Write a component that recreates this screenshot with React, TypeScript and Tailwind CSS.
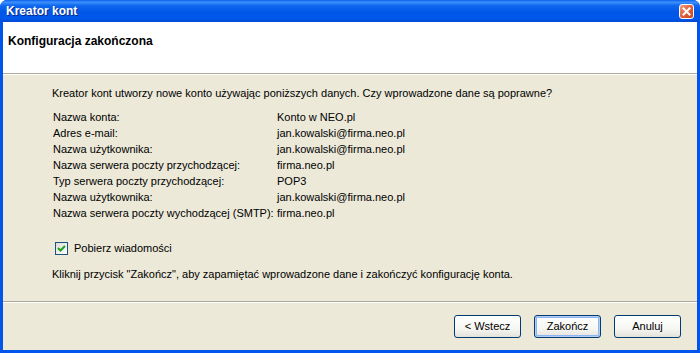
const rows: [string, string][] = [
  ["Nazwa konta:", "Konto w NEO.pl"],
  ["Adres e-mail:", "jan.kowalski@firma.neo.pl"],
  ["Nazwa użytkownika:", "jan.kowalski@firma.neo.pl"],
  ["Nazwa serwera poczty przychodzącej:", "firma.neo.pl"],
  ["Typ serwera poczty przychodzącej:", "POP3"],
  ["Nazwa użytkownika:", "jan.kowalski@firma.neo.pl"],
  ["Nazwa serwera poczty wychodzącej (SMTP):", "firma.neo.pl"],
];

function XpButton({ label, focused }: { label: string; focused?: boolean }) {
  return (
    <button
      className={
        "h-[23px] w-[67px] rounded-[3px] border border-[#003C74] bg-[linear-gradient(to_bottom,#FFFFFF_0%,#F6F6F3_60%,#E3E2DA_100%)] text-[11px] leading-none text-black " +
        (focused ? "shadow-[inset_0_0_0_1px_#B6CDF1,inset_0_0_0_2px_#8CB4F2]" : "")
      }
    >
      {label}
    </button>
  );
}

export default function App() {
  return (
    <div
      className="flex h-[353px] w-[700px] flex-col overflow-hidden rounded-t-[7px] bg-[#0055EA] font-['Liberation_Sans',Arial,sans-serif] text-[11px] leading-4 text-black"
    >
      {/* title bar */}
      <div className="flex h-[22px] shrink-0 items-center justify-between bg-[linear-gradient(to_bottom,#0A5FF0_0%,#3E91FB_10%,#1068F0_25%,#0056E6_55%,#0058EC_85%,#0048D0_100%)] pl-[6px] pr-[6px]">
        <span className="text-[12px] font-bold text-white [text-shadow:1px_1px_0_#0A2A8A]">
          Kreator kont
        </span>
        <div className="mt-[1px] flex h-[15px] w-[15px] items-center justify-center rounded-[3px] border border-white bg-[linear-gradient(135deg,#F0A184_0%,#E3643E_45%,#C84522_100%)]">
          <svg width="9" height="9" viewBox="0 0 9 9">
            <path d="M1.5 1.5 L7.5 7.5 M7.5 1.5 L1.5 7.5" stroke="white" strokeWidth="2" strokeLinecap="square" />
          </svg>
        </div>
      </div>

      {/* client area */}
      <div className="mx-[3px] mb-[3px] flex flex-1 flex-col bg-[#ECE9D8]">
        <div className="flex h-[51px] shrink-0 items-start bg-white pl-[5px] pt-[11px]">
          <span className="text-[12px] font-bold">Konfiguracja zakończona</span>
        </div>
        <div className="h-px bg-[#ACA899]" />
        <div className="h-px bg-white" />

        <div className="flex flex-1 flex-col pl-[49px] pt-[10px]">
          <p>Kreator kont utworzy nowe konto używając poniższych danych. Czy wprowadzone dane są poprawne?</p>
          <div className="mt-2 grid grid-cols-[224px_1fr] pl-px">
            {rows.map(([k, v], i) => (
              <div key={i} className="contents">
                <span>{k}</span>
                <span>{v}</span>
              </div>
            ))}
          </div>
          <label className="mt-[19px] flex h-4 items-center gap-[6px] pl-[3px]">
            <span className="flex h-[13px] w-[13px] items-center justify-center border border-[#1C5180] bg-[linear-gradient(135deg,#DCDCD7_0%,#FFFFFF_100%)]">
              <svg width="9" height="9" viewBox="0 0 9 9">
                <path d="M1 4 L3.5 6.5 L8 2" fill="none" stroke="#21A121" strokeWidth="2" />
              </svg>
            </span>
            <span>Pobierz wiadomości</span>
          </label>
          <p className="mt-[10px]">
            Kliknij przycisk "Zakończ", aby zapamiętać wprowadzone dane i zakończyć konfigurację konta.
          </p>
        </div>

        <div className="h-px bg-[#ACA899]" />
        <div className="h-px bg-white" />
        <div className="flex h-[47px] shrink-0 items-start justify-end gap-[13px] pr-[16px] pt-[12px]">
          <XpButton label="< Wstecz" />
          <XpButton label="Zakończ" focused />
          <XpButton label="Anuluj" />
        </div>
      </div>
    </div>
  );
}
